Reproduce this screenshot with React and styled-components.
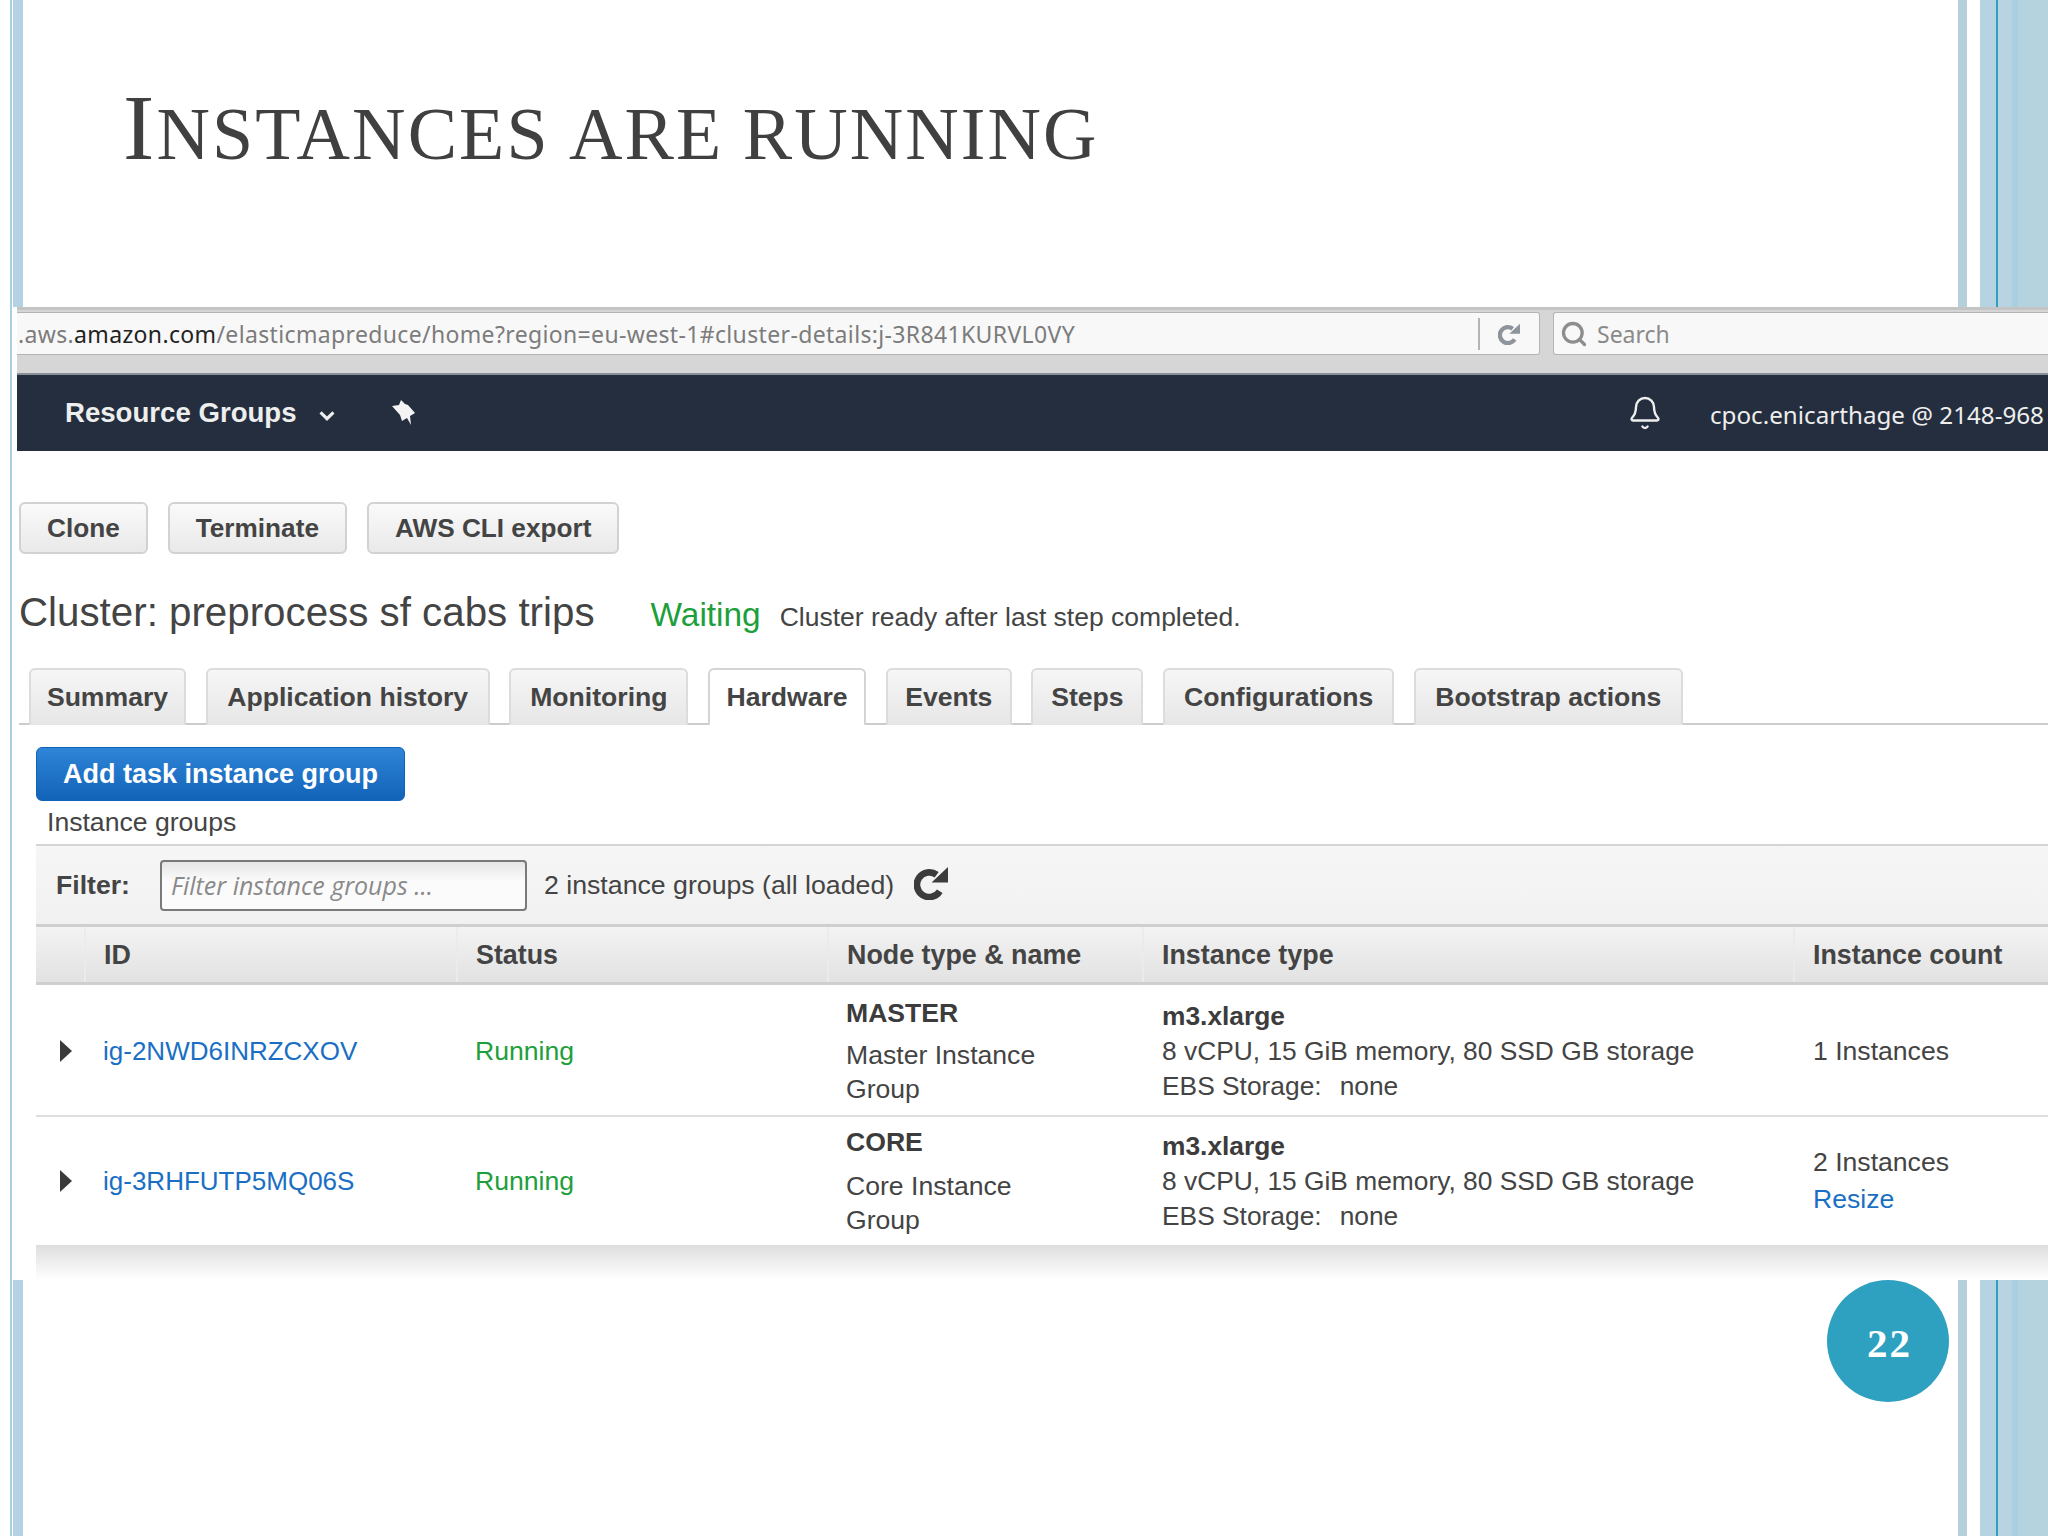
import React from "react";
import styled, { createGlobalStyle } from "styled-components";
import { Bell, Search } from "lucide-react";

const SANS = `"Liberation Sans", Arial, sans-serif`;
const UI = `"Noto Sans", "Open Sans", sans-serif`;

const tabs = [
  { label: "Summary", width: 157 },
  { label: "Application history", width: 284 },
  { label: "Monitoring", width: 179 },
  { label: "Hardware", width: 158, active: true },
  { label: "Events", width: 126 },
  { label: "Steps", width: 112 },
  { label: "Configurations", width: 231 },
  { label: "Bootstrap actions", width: 269 },
];

const columns = ["", "ID", "Status", "Node type & name", "Instance type", "Instance count"];

const groups = [
  {
    id: "ig-2NWD6INRZCXOV",
    role: "MASTER",
    name: ["Master Instance", "Group"],
    count: "1 Instances",
    nodeTop: 9,
    nodeGap: 8,
    lead: true,
  },
  {
    id: "ig-3RHFUTP5MQ06S",
    role: "CORE",
    name: ["Core Instance", "Group"],
    count: "2 Instances",
    nodeTop: 8,
    nodeGap: 10,
    resize: true,
  },
];

// same refresh arrow in the url bar and the filter bar, only size/colour differ
function RefreshGlyph({ size, color }) {
  return (
    <svg width={size} height={size} viewBox="0 0 33 33" style={{ display: "block" }}>
      <path d="M25 24.5A12 12 0 1 1 22 8.5" fill="none" stroke={color} strokeWidth="6.5" />
      <path d="M33 1v15H17z" fill={color} />
    </svg>
  );
}

function App() {
  return (
    <>
      <GlobalStyle />
      <Slide>
        <TitleArea>
          <Title>
            <BigCap>I</BigCap>nstances are running
          </Title>
        </TitleArea>
        <Shot>
          <BrowserBar>
            <UrlBox>
              <UrlText>
                .aws.<b>amazon.com</b>/elasticmapreduce/home?region=eu-west-1#cluster-details:j-3R841KURVL0VY
              </UrlText>
              <UrlDivider />
              <ReloadSlot>
                <RefreshGlyph size={22} color="#8e949c" />
              </ReloadSlot>
            </UrlBox>
            <SearchBox>
              <Search size={28} color="#8d8d8d" strokeWidth={2.8} />
              <span>Search</span>
            </SearchBox>
          </BrowserBar>
          <Nav>
            <NavTitle>Resource Groups</NavTitle>
            <NavChevron viewBox="0 0 14 10">
              <path d="M2 2.5l5 5 5-5" fill="none" stroke="#eee" strokeWidth="2.4" />
            </NavChevron>
            <PinIcon viewBox="0 0 24 26">
              <path d="M9 0l4 4 3 1 7 8-5 3 1 9-4-7-5 3-2-6-8-9 7-1z" fill="#f4f4f4" />
            </PinIcon>
            <BellWrap>
              <Bell size={36} color="#eeeeee" strokeWidth={1.6} />
            </BellWrap>
            <UserText>cpoc.enicarthage @ 2148-968</UserText>
          </Nav>
          <Actions>
            <ActionButton>Clone</ActionButton>
            <ActionButton>Terminate</ActionButton>
            <ActionButton>AWS CLI export</ActionButton>
          </Actions>
          <ClusterRow>
            <ClusterName>Cluster: preprocess sf cabs trips</ClusterName>
            <ClusterState>Waiting</ClusterState>
            <ClusterNote>Cluster ready after last step completed.</ClusterNote>
          </ClusterRow>
          <TabBar>
            {tabs.map((t) => (
              <Tab key={t.label} $active={t.active} $width={t.width}>
                {t.label}
              </Tab>
            ))}
          </TabBar>
          <Panel>
            <PrimaryButton>Add task instance group</PrimaryButton>
            <PanelLabel>Instance groups</PanelLabel>
            <FilterBar>
              <FilterLabel>Filter:</FilterLabel>
              <FilterInput placeholder="Filter instance groups ..." />
              <FilterCount>2 instance groups (all loaded)</FilterCount>
              <FilterRefresh>
                <RefreshGlyph size={34} color="#3c3c3c" />
              </FilterRefresh>
            </FilterBar>
            <HeaderRow>
              {columns.map((c, i) => (
                <HeaderCell key={i}>{c}</HeaderCell>
              ))}
            </HeaderRow>
            {groups.map((g) => (
              <Row key={g.id} $lead={g.lead}>
                <CaretCell>
                  <Caret />
                </CaretCell>
                <Cell>
                  <IdLink>{g.id}</IdLink>
                </Cell>
                <Cell>
                  <Running>Running</Running>
                </Cell>
                <NodeCell $top={g.nodeTop}>
                  <NodeRole $gap={g.nodeGap}>{g.role}</NodeRole>
                  {g.name.map((n) => (
                    <div key={n}>{n}</div>
                  ))}
                </NodeCell>
                <TypeCell>
                  <b>m3.xlarge</b>
                  <div>8 vCPU, 15 GiB memory, 80 SSD GB storage</div>
                  <div>
                    EBS Storage:<EbsValue>none</EbsValue>
                  </div>
                </TypeCell>
                <CountCell>
                  <div>{g.count}</div>
                  {g.resize && <Link>Resize</Link>}
                </CountCell>
              </Row>
            ))}
            <TableShadow />
          </Panel>
        </Shot>
        <Footer>
          <PageBadge>22</PageBadge>
        </Footer>
      </Slide>
    </>
  );
}

export default App;

const GlobalStyle = createGlobalStyle`
  html, body {
    margin: 0;
    padding: 0;
    background: #fff;
  }
  * {
    box-sizing: border-box;
  }
`;

const Slide = styled.div`
  width: 2048px;
  height: 1536px;
  overflow: hidden;
  display: flex;
  flex-direction: column;
  font-family: ${SANS};
  color: #444;
  background: linear-gradient(
    to right,
    #fff 0 10px,
    #a9cfe3 10px 12px,
    #fff 12px 13px,
    #b3d3e3 13px 23px,
    #fff 23px 1958px,
    #b5d0da 1958px 1967px,
    #fff 1967px 1980px,
    #b5d3e0 1980px 1996px,
    #2fa0c0 1996px 1998px,
    #b8d4e2 1998px 2012px,
    #a9cfe0 2012px 2018px,
    #b5d3df 2018px
  );
`;

const TitleArea = styled.header`
  height: 307px;
  padding: 74px 0 0 123px;
`;

const Title = styled.h1`
  margin: 0;
  font-family: "Liberation Serif", "Times New Roman", serif;
  font-weight: 400;
  font-size: 105px;
  line-height: 100px;
  font-variant: small-caps;
  letter-spacing: 2.1px;
  word-spacing: -9px;
  color: #404040;
  white-space: nowrap;
`;

const BigCap = styled.span`
  font-size: 94px;
`;

const Shot = styled.section`
  height: 973px;
  margin-left: 13px;
  padding-left: 4px;
  background: #fff;
  overflow: hidden;
  display: flex;
  flex-direction: column;
`;

const BrowserBar = styled.div`
  height: 66px;
  flex: none;
  display: flex;
  gap: 13px;
  padding-top: 2px;
  background: #d6d6d6;
  border-top: 3px solid #c4c4c4;
`;

const UrlBox = styled.div`
  width: 1523px;
  height: 43px;
  flex: none;
  display: flex;
  align-items: center;
  background: #f8f8f8;
  border: 1px solid #b4b4b4;
  border-left: 0;
  border-radius: 0 3px 3px 0;
  font-family: ${UI};
  font-size: 23px;
  color: #7c7c7c;
`;

const UrlText = styled.div`
  flex: 1;
  padding-left: 1px;
  white-space: nowrap;
  letter-spacing: 0.35px;
  b {
    font-weight: 400;
    color: #222;
  }
`;

const UrlDivider = styled.div`
  width: 2px;
  height: 32px;
  background: #b4b4b4;
`;

const ReloadSlot = styled.div`
  margin: 0 19px 0 18px;
`;

const SearchBox = styled.div`
  flex: 1;
  height: 43px;
  display: flex;
  align-items: center;
  gap: 9px;
  padding-left: 6px;
  background: #f8f8f8;
  border: 1px solid #b4b4b4;
  border-right: 0;
  border-radius: 3px 0 0 3px;
  font-family: ${UI};
  font-size: 23px;
  color: #8a8a8a;
`;

const Nav = styled.nav`
  height: 78px;
  flex: none;
  display: flex;
  align-items: center;
  padding-left: 48px;
  background: #242e3e;
  border-top: 2px solid #8b9098;
  color: #eee;
`;

const NavTitle = styled.div`
  font-size: 27.6px;
  font-weight: 700;
`;

const NavChevron = styled.svg`
  width: 18px;
  height: 13px;
  margin: 5px 0 0 21px;
`;

const PinIcon = styled.svg`
  width: 24px;
  height: 26px;
  margin-left: 56px;
`;

const BellWrap = styled.div`
  display: flex;
  margin-left: auto;
`;

const UserText = styled.div`
  margin: 2px 0 0 47px;
  width: 338px;
  font-family: ${UI};
  font-size: 24.2px;
  white-space: nowrap;
`;

const Actions = styled.div`
  display: flex;
  gap: 20px;
  flex: none;
  margin: 51px 0 0 2px;
`;

const ActionButton = styled.button`
  height: 52px;
  padding: 0 26px;
  font-family: ${SANS};
  font-size: 26.2px;
  font-weight: 700;
  color: #444;
  background: linear-gradient(#fafafa, #e9e9e9);
  border: 2px solid #d2d2d2;
  border-radius: 6px;
`;

const ClusterRow = styled.div`
  display: flex;
  align-items: baseline;
  flex: none;
  height: 64px;
  margin: 27px 0 0 2px;
`;

const ClusterName = styled.div`
  font-size: 40.3px;
  line-height: 64px;
`;

const ClusterState = styled.div`
  margin-left: 56px;
  font-size: 33.4px;
  color: #1d9f3c;
`;

const ClusterNote = styled.div`
  margin-left: 19px;
  font-size: 26.5px;
`;

const TabBar = styled.div`
  display: flex;
  flex: none;
  gap: 19.7px;
  height: 57px;
  margin: 23px 0 0 2px;
  padding-left: 10px;
  border-bottom: 2px solid #ccc;
`;

const Tab = styled.div`
  width: ${(p) => p.$width}px;
  height: 57px;
  flex: none;
  display: flex;
  align-items: center;
  justify-content: center;
  font-size: 26.6px;
  font-weight: 700;
  color: #444;
  border: 2px solid ${(p) => (p.$active ? "#d4d4d4" : "#dcdcdc")};
  border-bottom: 0;
  border-radius: 6px 6px 0 0;
  background: ${(p) => (p.$active ? "#fff" : "linear-gradient(#f6f6f6, #e6e6e6)")};
`;

const Panel = styled.div`
  flex: 1;
  display: flex;
  flex-direction: column;
  align-items: flex-start;
  padding: 22px 0 0 19px;
`;

const PrimaryButton = styled.button`
  width: 369px;
  height: 54px;
  flex: none;
  font-family: ${SANS};
  font-size: 27px;
  font-weight: 700;
  color: #fff;
  background: linear-gradient(#3085d8, #1163b8);
  border: 1px solid #1163b8;
  border-radius: 6px;
`;

const PanelLabel = styled.div`
  height: 43px;
  flex: none;
  display: flex;
  align-items: center;
  padding-left: 11px;
  font-size: 26.6px;
`;

const FilterBar = styled.div`
  width: 100%;
  height: 80px;
  flex: none;
  display: flex;
  align-items: center;
  padding-left: 20px;
  background: linear-gradient(#f6f6f6, #f1f1f1);
  border-top: 2px solid #d4d4d4;
`;

const FilterLabel = styled.div`
  width: 104px;
  font-size: 26.6px;
  font-weight: 700;
`;

const FilterInput = styled.input`
  width: 367px;
  height: 51px;
  padding: 0 9px;
  font-family: "Open Sans", "Noto Sans", sans-serif;
  font-size: 25px;
  font-style: italic;
  background: linear-gradient(#e6e6e6, #fbfbfb 40%);
  border: 2px solid #7a7a7a;
  border-radius: 4px;
  &::placeholder {
    color: #8a8a8a;
    opacity: 1;
  }
`;

const FilterCount = styled.div`
  margin: 0 20px 0 17px;
  font-size: 26.7px;
`;

const FilterRefresh = styled.div`
  margin-bottom: 4px;
`;

const tableGrid = `
  display: grid;
  grid-template-columns: 48px 372px 371px 315px 651px 1fr;
  width: 100%;
  flex: none;
`;

const HeaderRow = styled.div`
  ${tableGrid}
  height: 61px;
  background: linear-gradient(#f3f3f3, #e2e2e2);
  border-top: 3px solid #cfcfcf;
  border-bottom: 3px solid #cfcfcf;
`;

const HeaderCell = styled.div`
  display: flex;
  align-items: center;
  padding: 2px 0 0 18px;
  font-size: 26.85px;
  font-weight: 700;
  & + & {
    border-left: 2px solid #ebebeb;
  }
`;

const Row = styled.div`
  ${tableGrid}
  height: 130px;
  padding-top: ${(p) => (p.$lead ? 2 : 0)}px;
  background: #fff;
  font-size: 26.6px;
  & + & {
    border-top: 2px solid #dedede;
  }
`;

const Cell = styled.div`
  display: flex;
  align-items: center;
  padding-left: 19px;
`;

const CaretCell = styled(Cell)`
  padding-left: 24px;
`;

const Caret = styled.div`
  width: 0;
  height: 0;
  border-style: solid;
  border-width: 11px 0 11px 12px;
  border-color: transparent transparent transparent #3a3a3a;
`;

const Link = styled.div`
  color: #1a6fc4;
`;

const IdLink = styled(Link)`
  font-size: 26px;
`;

const Running = styled.div`
  color: #1d9f3c;
`;

const NodeCell = styled.div`
  padding: ${(p) => p.$top}px 0 0 19px;
  line-height: 34px;
`;

const NodeRole = styled.div`
  margin-bottom: ${(p) => p.$gap}px;
  font-weight: 700;
  color: #3c3c3c;
`;

const TypeCell = styled.div`
  display: flex;
  flex-direction: column;
  justify-content: center;
  padding-left: 20px;
  font-size: 26.35px;
  line-height: 35px;
  b {
    color: #3c3c3c;
  }
`;

const EbsValue = styled.span`
  margin-left: 18px;
`;

const CountCell = styled.div`
  display: flex;
  flex-direction: column;
  justify-content: center;
  padding-left: 20px;
  line-height: 37px;
`;

const TableShadow = styled.div`
  width: 100%;
  height: 35px;
  flex: none;
  background: linear-gradient(#dedede, #fff);
`;

const Footer = styled.footer`
  flex: 1;
  display: flex;
  justify-content: flex-end;
  padding-right: 99px;
`;

const PageBadge = styled.div`
  width: 122px;
  height: 122px;
  display: flex;
  align-items: center;
  justify-content: center;
  padding: 4px 0 0 3px;
  border-radius: 50%;
  background: #2ea1c1;
  font-family: "Liberation Serif", "Times New Roman", serif;
  font-size: 41px;
  font-weight: 700;
  letter-spacing: 2px;
  color: #fff;
`;
